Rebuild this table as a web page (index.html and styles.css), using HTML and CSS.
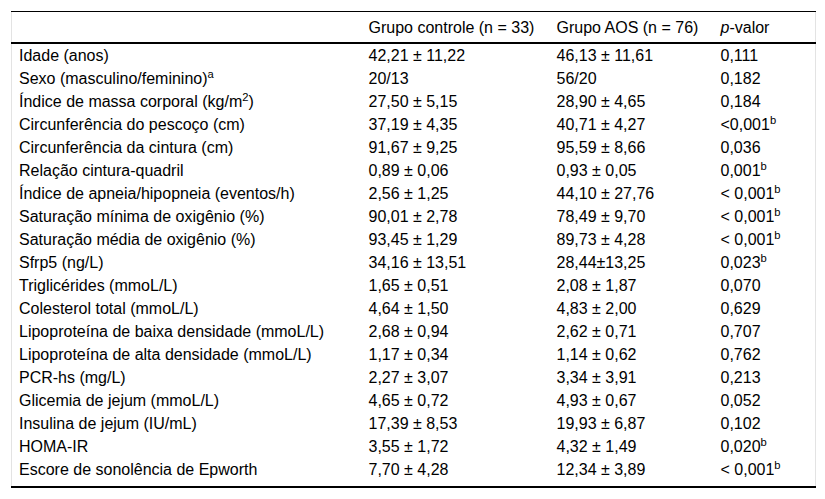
FILE: index.html
```html
<!DOCTYPE html>
<html lang="pt">
<head>
<meta charset="utf-8">
<title>Tabela</title>
<link rel="stylesheet" href="styles.css">
</head>
<body>
<div class="wrap">
<table class="data">
<colgroup>
<col class="c1"><col class="c2"><col class="c3"><col class="c4">
</colgroup>
<thead>
<tr><th></th><th>Grupo controle (n = 33)</th><th>Grupo AOS (n = 76)</th><th><i>p</i>-valor</th></tr>
</thead>
<tbody>
<tr><td>Idade (anos)</td><td>42,21 ± 11,22</td><td>46,13 ± 11,61</td><td>0,111</td></tr>
<tr><td>Sexo (masculino/feminino)<sup>a</sup></td><td>20/13</td><td>56/20</td><td>0,182</td></tr>
<tr><td>Índice de massa corporal (kg/m<sup>2</sup>)</td><td>27,50 ± 5,15</td><td>28,90 ± 4,65</td><td>0,184</td></tr>
<tr><td>Circunferência do pescoço (cm)</td><td>37,19 ± 4,35</td><td>40,71 ± 4,27</td><td>&lt;0,001<sup>b</sup></td></tr>
<tr><td>Circunferência da cintura (cm)</td><td>91,67 ± 9,25</td><td>95,59 ± 8,66</td><td>0,036</td></tr>
<tr><td>Relação cintura-quadril</td><td>0,89 ± 0,06</td><td>0,93 ± 0,05</td><td>0,001<sup>b</sup></td></tr>
<tr><td>Índice de apneia/hipopneia (eventos/h)</td><td>2,56 ± 1,25</td><td>44,10 ± 27,76</td><td>&lt; 0,001<sup>b</sup></td></tr>
<tr><td>Saturação mínima de oxigênio (%)</td><td>90,01 ± 2,78</td><td>78,49 ± 9,70</td><td>&lt; 0,001<sup>b</sup></td></tr>
<tr><td>Saturação média de oxigênio (%)</td><td>93,45 ± 1,29</td><td>89,73 ± 4,28</td><td>&lt; 0,001<sup>b</sup></td></tr>
<tr><td>Sfrp5 (ng/L)</td><td>34,16 ± 13,51</td><td>28,44±13,25</td><td>0,023<sup>b</sup></td></tr>
<tr><td>Triglicérides (mmoL/L)</td><td>1,65 ± 0,51</td><td>2,08 ± 1,87</td><td>0,070</td></tr>
<tr><td>Colesterol total (mmoL/L)</td><td>4,64 ± 1,50</td><td>4,83 ± 2,00</td><td>0,629</td></tr>
<tr><td>Lipoproteína de baixa densidade (mmoL/L)</td><td>2,68 ± 0,94</td><td>2,62 ± 0,71</td><td>0,707</td></tr>
<tr><td>Lipoproteína de alta densidade (mmoL/L)</td><td>1,17 ± 0,34</td><td>1,14 ± 0,62</td><td>0,762</td></tr>
<tr><td>PCR-hs (mg/L)</td><td>2,27 ± 3,07</td><td>3,34 ± 3,91</td><td>0,213</td></tr>
<tr><td>Glicemia de jejum (mmoL/L)</td><td>4,65 ± 0,72</td><td>4,93 ± 0,67</td><td>0,052</td></tr>
<tr><td>Insulina de jejum (IU/mL)</td><td>17,39 ± 8,53</td><td>19,93 ± 6,87</td><td>0,102</td></tr>
<tr><td>HOMA-IR</td><td>3,55 ± 1,72</td><td>4,32 ± 1,49</td><td>0,020<sup>b</sup></td></tr>
<tr><td>Escore de sonolência de Epworth</td><td>7,70 ± 4,28</td><td>12,34 ± 3,89</td><td>&lt; 0,001<sup>b</sup></td></tr>
</tbody>
</table>
</div>
</body>
</html>
```

FILE: styles.css
```css
html, body {
  margin: 0;
  padding: 0;
  background: #fff;
}
.wrap {
  padding: 11px 10px 0 11px;
}
.data {
  width: 804px;
  table-layout: fixed;
  border-collapse: collapse;
  font-family: "Liberation Sans", Arial, sans-serif;
  font-size: 16px;
  line-height: 19px;
  color: #000;
  border-left: 1px solid #e3e3e3;
  border-right: 1px solid #e3e3e3;
  border-bottom: 2px solid #000;
}
.c1 { width: 350px; }
.c2 { width: 188px; }
.c3 { width: 164px; }
.c4 { width: 102px; }
.data thead tr {
  border-top: 1px solid #000;
  border-bottom: 2px solid #000;
}
.data th {
  font-weight: normal;
  text-align: left;
  padding: 6px 8px 5px 7px;
}
.data td {
  padding: 2px 8px 2px 7px;
  vertical-align: middle;
  white-space: nowrap;
}
.data sup {
  font-size: 0.7em;
  line-height: 0;
}
.data tbody tr:last-child td {
  padding-bottom: 7px;
}
```
